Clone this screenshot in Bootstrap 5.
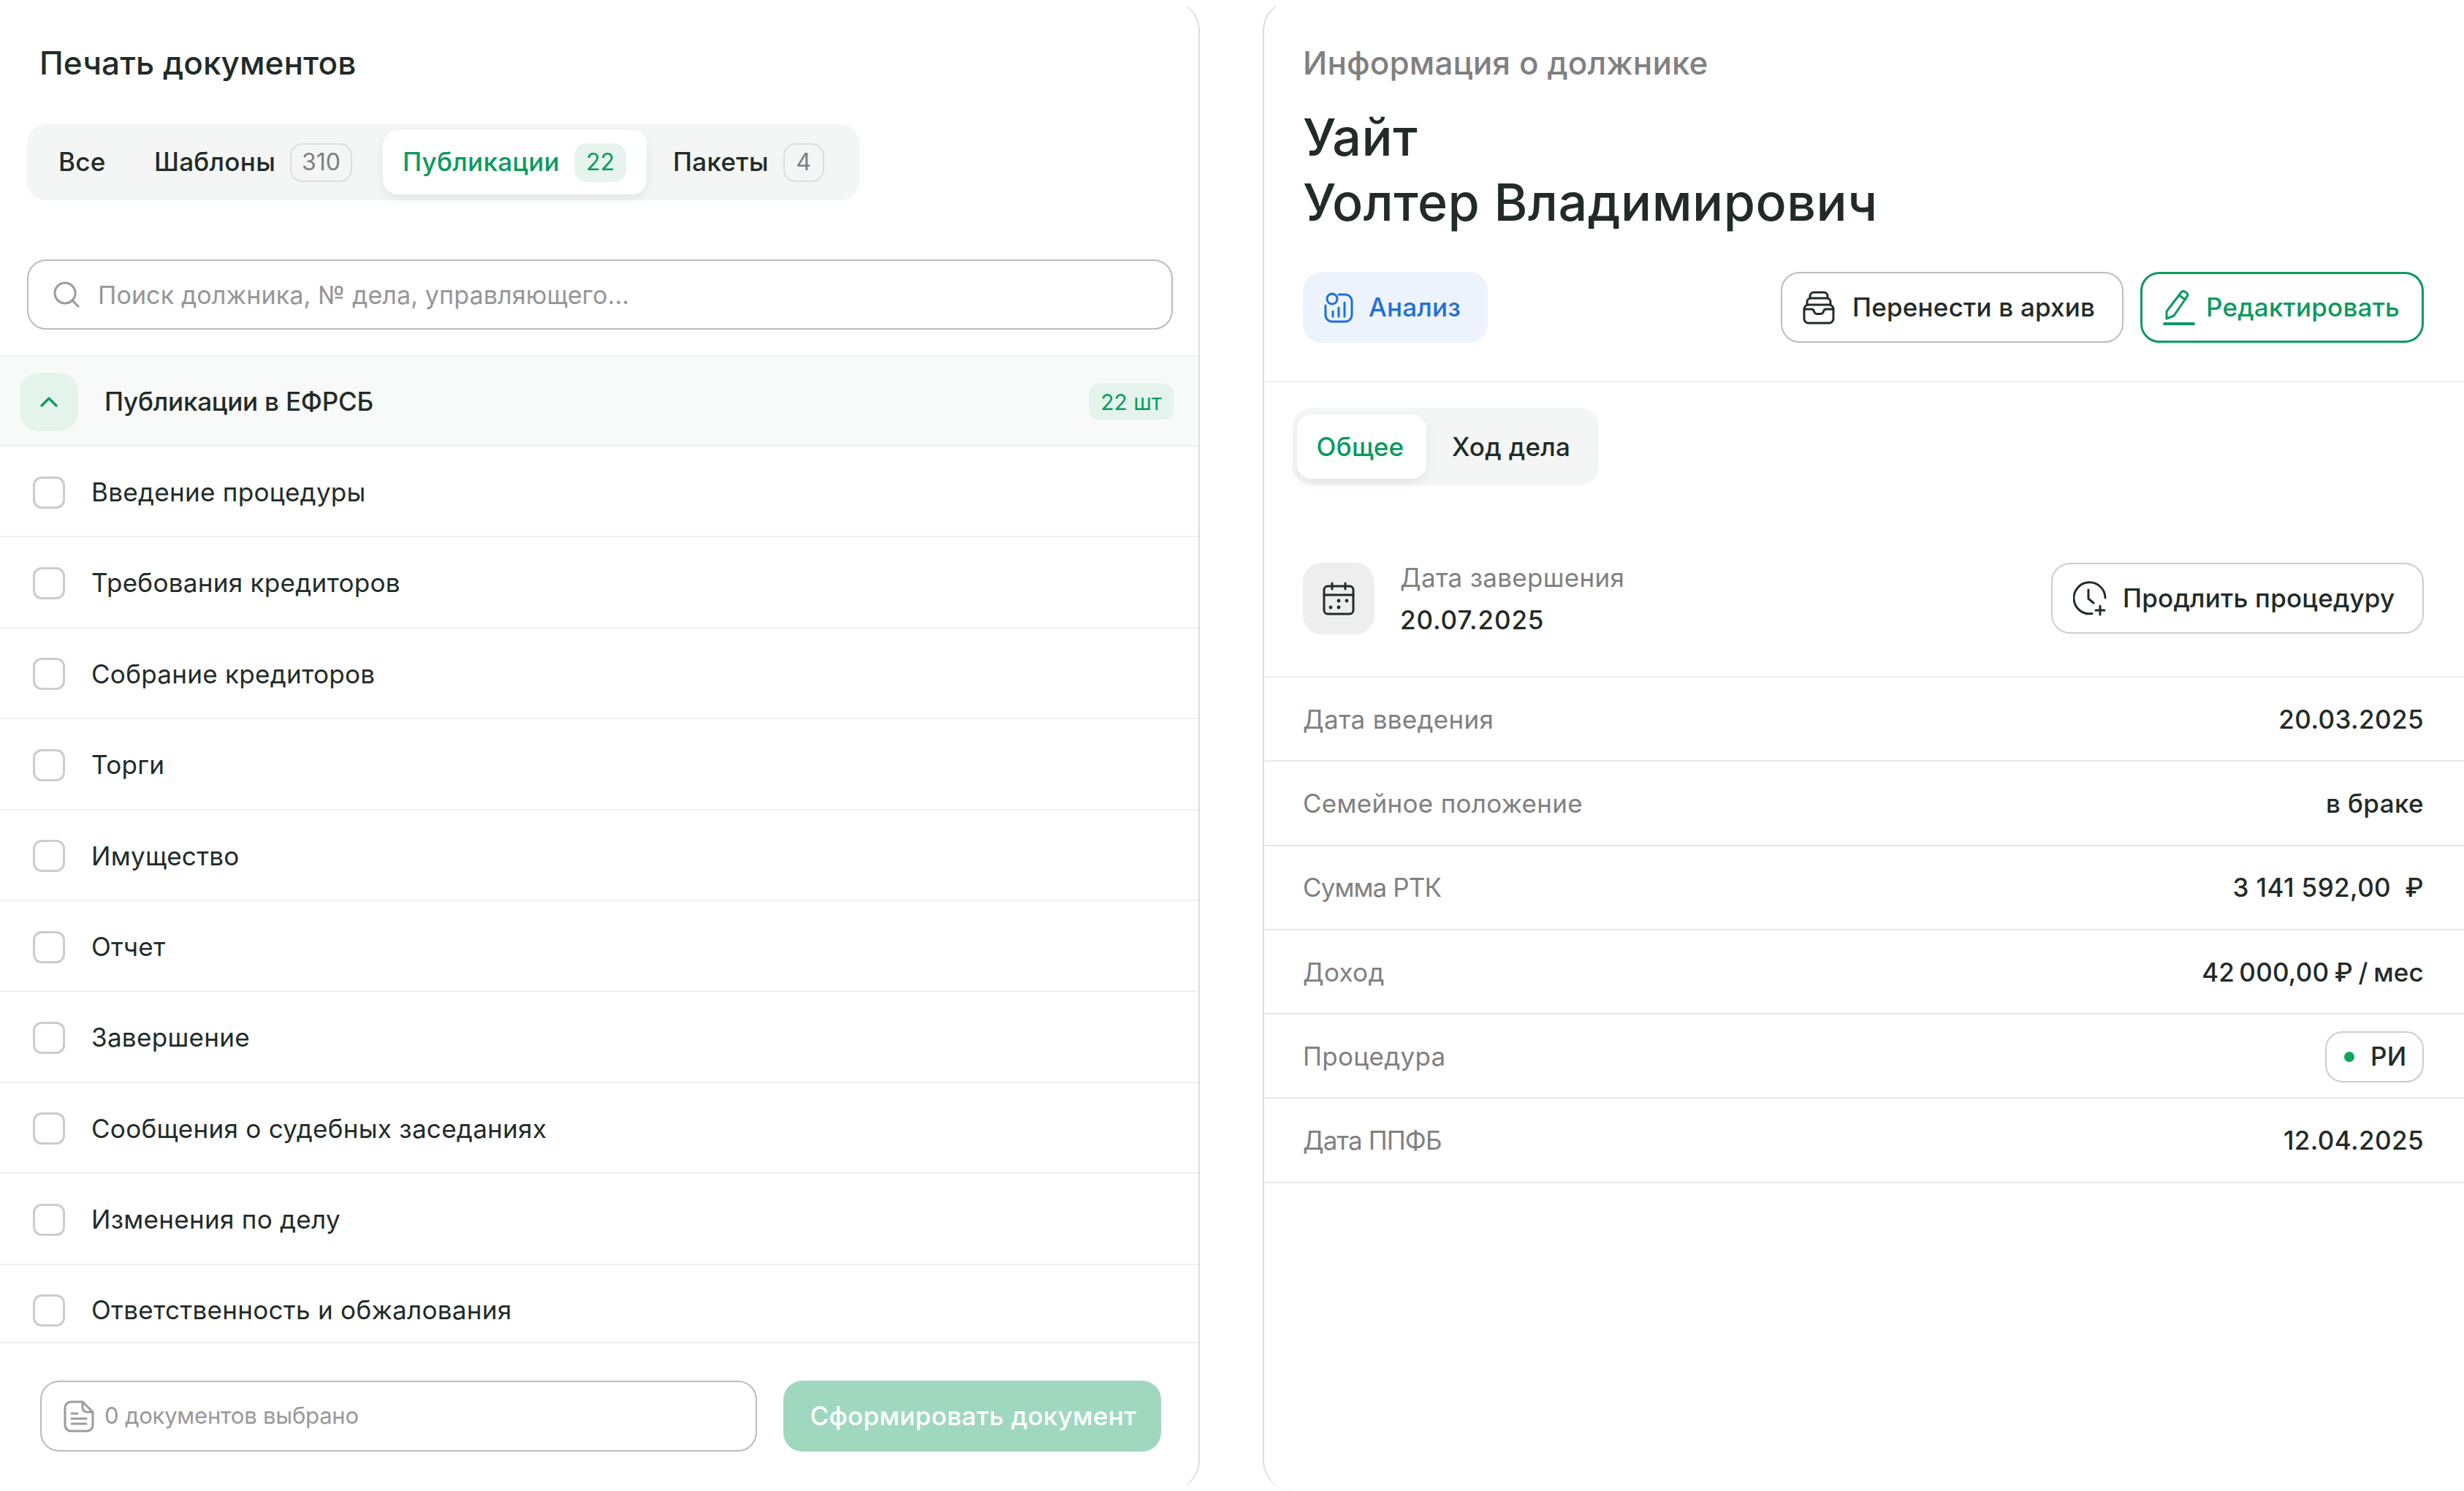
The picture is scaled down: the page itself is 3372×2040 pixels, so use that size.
<!DOCTYPE html>
<html lang="ru">
<head>
    <meta charset="UTF-8">
    <meta name="viewport" content="width=device-width, initial-scale=1.0">
    <title>Печать документов</title>
    <link href="https://cdn.jsdelivr.net/npm/bootstrap@5.3.0/dist/css/bootstrap.min.css" rel="stylesheet">
    <style>
        body {
            background: #fff;
            color: #222b27;
            font-family: "Inter", "Noto Sans", sans-serif;
            font-size: 35px;
            font-weight: 400;
            line-height: 1.3;
            letter-spacing: 0.3px;
            height: 2040px;
            overflow: hidden;
        }
        svg { display: block; flex-shrink: 0; }
        .screen { height: 2040px; gap: 86px; }
        .print-panel {
            width: 1642px;
            height: 2040px;
            border-right: 2px solid #dcdcdc;
            border-top: 1px solid transparent;
            border-bottom: 1px solid transparent;
            border-radius: 0 42px 42px 0;
        }
        .info-panel {
            height: 2040px;
            border-left: 2px solid #dcdcdc;
            border-top: 1px solid transparent;
            border-radius: 42px 42px 0 42px;
        }
        .panel-title { font-size: 44px; font-weight: 500; line-height: 52px; letter-spacing: 0.1px; }
        .print-title { margin: 59px 0 58px 54px; flex-shrink: 0; }

        .seg-tabs { background: #f4f6f5; border-radius: 26px; flex-shrink: 0; }
        .print-tabs { margin-left: 37px; width: 1139px; height: 104px; padding-left: 43px; }
        .seg-tabs .nav-link {
            color: #222b27;
            font-weight: 500;
            height: 88px;
            padding: 0;
            display: flex;
            align-items: center;
            border-radius: 20px;
        }
        .seg-tabs .nav-link.active {
            background: #fff;
            color: #0b9a5e;
            box-shadow: 0 6px 14px rgba(30, 50, 40, .08);
        }
        .tab-all { width: 131px; }
        .tab-tpl { width: 313px; }
        .tab-pub .nav-link { width: 361px; padding-left: 27px; }
        .tab-pack { margin-left: 36px; }
        .tab-count {
            height: 53px;
            min-width: 56px;
            padding: 0 14px;
            margin-left: 20px;
            font-size: 32px;
            font-weight: 400;
            letter-spacing: 0;
            color: #7c7f7e;
            background: transparent;
            border: 2px solid #dcdedd;
            border-radius: 17px;
            display: flex;
            align-items: center;
            justify-content: center;
        }
        .tab-count-on { background: #e7f4ee; border-color: #e7f4ee; color: #0b9a5e; }

        .search-box {
            margin: 81px 35px 35px 37px;
            height: 96px;
            flex-shrink: 0;
            border: 2px solid #bcbcbc;
            border-radius: 26px;
            padding-left: 33px;
            gap: 24px;
        }
        .search-box .form-control {
            border: 0;
            padding: 0;
            font-size: 34px;
            font-weight: 400;
            letter-spacing: 0.12px;
            color: #222b27;
            box-shadow: none;
        }
        .search-box .form-control::placeholder { color: #969696; opacity: 1; }

        .group-head {
            height: 125px;
            background: #f8faf9;
            border-top: 2px solid #eeefef;
            border-bottom: 2px solid #eeefef;
            padding: 2px 34px 0 27px;
        }
        .chevron-box {
            width: 80px;
            height: 80px;
            background: #e4f3ec;
            border-radius: 26px;
            margin-right: 36px;
        }
        .group-title { font-weight: 500; letter-spacing: -0.2px; }
        .qty-tag {
            height: 49px;
            width: 116px;
            background: #e4f3ec;
            color: #0b9a5e;
            font-size: 30px;
            font-weight: 400;
            letter-spacing: 0;
            border-radius: 13px;
            display: flex;
            align-items: center;
            justify-content: center;
        }
        .doc-rows { flex: 1 1 0; min-height: 0; overflow: hidden; }
        .doc-rows .list-group-item {
            flex: 0 0 124.4px;
            padding: 3px 0 0 45px;
            gap: 36px;
            color: #222b27;
            background: transparent;
            border: 0;
            border-bottom: 2px solid #eeefef;
            border-radius: 0;
        }
        .doc-rows .form-check-input {
            width: 44px;
            height: 44px;
            margin: 0;
            border: 3px solid #cccccc;
            border-radius: 12px;
            flex-shrink: 0;
        }
        .print-foot {
            height: 203px;
            flex-shrink: 0;
            border-top: 2px solid #eeefef;
            padding: 51px 51px 0 55px;
            gap: 36px;
        }
        .picked-box {
            width: 982px;
            height: 97px;
            border: 2px solid #bcbcbc;
            border-radius: 26px;
            padding-left: 29px;
            gap: 13px;
            color: #999;
            font-size: 31px;
            font-weight: 400;
            letter-spacing: -0.2px;
        }
        .btn.make-btn {
            width: 518px;
            height: 97px;
            padding: 0 0 0 3px;
            background: #a0d8bf;
            border: 0;
            border-radius: 26px;
            color: #fff;
            font-size: 35px;
            font-weight: 500;
            letter-spacing: 0.3px;
        }

        .info-head { padding: 59px 55px 50px 53px; border-bottom: 2px solid #eeefef; height: 522px; }
        .info-sub { color: #808080; }
        .debtor-name {
            font-size: 70px;
            font-weight: 500;
            line-height: 89px;
            letter-spacing: 0.5px;
            margin: 31px 0 0;
        }
        .head-actions { margin-top: 51px; gap: 23px; }
        .btn.act-btn {
            height: 97px;
            padding: 0;
            font-size: 35px;
            font-weight: 500;
            letter-spacing: 0.2px;
            border-radius: 26px;
            display: flex;
            align-items: center;
            color: #222b27;
            background: #fff;
            border: 2px solid #bcbcbc;
        }
        .btn.analysis-btn { width: 253px; background: #edf3fc; border-color: #edf3fc; color: #1f6fdc; gap: 21px; padding-left: 27px; }
        .btn.archive-btn { width: 469px; gap: 23px; padding-left: 27px; }
        .btn.edit-btn { width: 388px; border: 3px solid #0b9a5e; color: #0b9a5e; gap: 15px; padding-left: 28px; }
        .case-tabs { margin: 35px 0 0 39px; width: 419px; height: 106px; padding: 9px 6px; }
        .case-tabs .nav-link { padding-top: 2px; }
        .case-tabs .nav-link.active { width: 177px; justify-content: center; padding-right: 4px; }
        .case-tabs .tab-plain { margin-left: 35px; }

        .term-row { height: 263px; padding: 106px 55px 0 53px; border-bottom: 2px solid #eeefef; }
        .term-icon { width: 98px; height: 98px; background: #eeeeee; border-radius: 26px; margin-right: 35px; }
        .term-label { color: #808080; line-height: 44px; margin-top: -2px; }
        .term-date { font-weight: 500; line-height: 44px; margin-top: 14px; letter-spacing: 0.9px; }
        .btn.extend-btn { width: 510px; height: 97px; margin-left: auto; gap: 22px; padding-left: 28px; border-color: #cdcdcd; }

        .facts .list-group-item {
            height: 115.3px;
            padding: 2px 55px 0 53px;
            border: 0;
            border-bottom: 2px solid #e8e9e9;
            border-radius: 0;
            color: #808080;
            background: transparent;
        }
        .fact-val { color: #222b27; font-weight: 500; letter-spacing: 0.4px; }
        .fact-tight { word-spacing: -2px; letter-spacing: 0.2px; }
        .caps-label { letter-spacing: -0.9px; }
        .stage-pill {
            width: 135px;
            height: 70px;
            border: 2px solid #cdcdcd;
            border-radius: 24px;
            color: #222b27;
            font-weight: 500;
            padding-left: 24px;
            gap: 22px;
        }
        .stage-dot { width: 14px; height: 14px; border-radius: 50%; background: #0ea55f; }
    </style>
</head>
<body>
<div class="screen d-flex">
    <div class="print-panel d-flex flex-column">
        <div class="panel-title print-title">Печать документов</div>
        <ul class="nav seg-tabs print-tabs align-items-center flex-nowrap">
            <li class="nav-item tab-all"><a class="nav-link" href="#">Все</a></li>
            <li class="nav-item tab-tpl"><a class="nav-link" href="#">Шаблоны<span class="badge tab-count">310</span></a></li>
            <li class="nav-item tab-pub"><a class="nav-link active" href="#">Публикации<span class="badge tab-count tab-count-on">22</span></a></li>
            <li class="nav-item tab-pack"><a class="nav-link" href="#">Пакеты<span class="badge tab-count">4</span></a></li>
        </ul>
        <div class="search-box d-flex align-items-center">
            <svg width="38" height="38" viewBox="0 0 38 38" fill="none" stroke="#9a9a9a" stroke-width="3" stroke-linecap="round"><circle cx="17" cy="17" r="14"/><path d="M27.5 27.5 35 35"/></svg>
            <input type="text" class="form-control" placeholder="Поиск должника, № дела, управляющего...">
        </div>
        <div class="group-head d-flex align-items-center flex-shrink-0">
            <div class="chevron-box d-flex align-items-center justify-content-center">
                <svg width="24" height="16" viewBox="0 0 24 16" fill="none" stroke="#0b9a5e" stroke-width="3.2" stroke-linecap="round" stroke-linejoin="round"><path d="M2 13 12 3l10 10"/></svg>
            </div>
            <span class="group-title">Публикации в ЕФРСБ</span>
            <span class="badge qty-tag ms-auto">22 шт</span>
        </div>
        <div class="list-group doc-rows">
            <label class="list-group-item d-flex align-items-center"><input class="form-check-input" type="checkbox">Введение процедуры</label>
            <label class="list-group-item d-flex align-items-center"><input class="form-check-input" type="checkbox">Требования кредиторов</label>
            <label class="list-group-item d-flex align-items-center"><input class="form-check-input" type="checkbox">Собрание кредиторов</label>
            <label class="list-group-item d-flex align-items-center"><input class="form-check-input" type="checkbox">Торги</label>
            <label class="list-group-item d-flex align-items-center"><input class="form-check-input" type="checkbox">Имущество</label>
            <label class="list-group-item d-flex align-items-center"><input class="form-check-input" type="checkbox">Отчет</label>
            <label class="list-group-item d-flex align-items-center"><input class="form-check-input" type="checkbox">Завершение</label>
            <label class="list-group-item d-flex align-items-center"><input class="form-check-input" type="checkbox">Сообщения о судебных заседаниях</label>
            <label class="list-group-item d-flex align-items-center"><input class="form-check-input" type="checkbox">Изменения по делу</label>
            <label class="list-group-item d-flex align-items-center"><input class="form-check-input" type="checkbox">Ответственность и обжалования</label>
        </div>
        <div class="print-foot d-flex align-items-start">
            <div class="picked-box d-flex align-items-center">
                <svg width="44" height="44" viewBox="0 0 44 44" fill="none" stroke="#9c9c9c" stroke-width="3" stroke-linecap="round" stroke-linejoin="round"><path d="M27 2H11a8 8 0 0 0-8 8v24a8 8 0 0 0 8 8h22a8 8 0 0 0 8-8V16L27 2Z"/><path d="M27 2v8a6 6 0 0 0 6 6h8"/><path d="M12 18h8M12 25h20M12 32h20"/></svg>
                <span>0 документов выбрано</span>
            </div>
            <button type="button" class="btn make-btn">Сформировать документ</button>
        </div>
    </div>
    <div class="info-panel flex-grow-1 d-flex flex-column">
        <div class="info-head flex-shrink-0">
            <div class="panel-title info-sub">Информация о должнике</div>
            <h1 class="debtor-name">Уайт<br>Уолтер Владимирович</h1>
            <div class="head-actions d-flex">
                <button type="button" class="btn act-btn analysis-btn me-auto">
                    <svg width="40" height="42" viewBox="0 0 40 42" fill="none" stroke="#1f6fdc" stroke-width="3" stroke-linecap="round" stroke-linejoin="round"><circle cx="11" cy="9" r="7"/><path d="M20 3h9a9 9 0 0 1 9 9v19a9 9 0 0 1-9 9H11a9 9 0 0 1-9-9V18"/><path d="M12 26v7M20 21v12M28 14v19"/></svg>
                    Анализ
                </button>
                <button type="button" class="btn act-btn archive-btn">
                    <svg width="46" height="46" viewBox="0 0 46 46" fill="none" stroke="#222b27" stroke-width="3" stroke-linecap="round" stroke-linejoin="round"><path d="M11 10V7a5 5 0 0 1 5-5h14a5 5 0 0 1 5 5v3"/><path d="M7 19v-4a5 5 0 0 1 5-5h22a5 5 0 0 1 5 5v4"/><rect x="3" y="19" width="40" height="25" rx="6"/><path d="M3 25h10c2 0 3 1 3.500 3 .5 2 2 3.500 4 3.500h5c2 0 3.500-1.500 4-3.500.5-2 1.500-3 3.500-3h10"/></svg>
                    Перенести в архив
                </button>
                <button type="button" class="btn act-btn edit-btn">
                    <svg width="44" height="48" viewBox="0 0 44 48" fill="none" stroke="#0b9a5e" stroke-width="3" stroke-linecap="round" stroke-linejoin="round"><path d="M5 29 25 3c1-1.500 3-2 5-.8l2 1.300c2 1.300 2.300 3 1.300 4.700L15 35l-10 4V29Z"/><path d="m22 7 9 6"/><path d="M2 46h40" stroke-width="4"/></svg>
                    Редактировать
                </button>
            </div>
        </div>
        <ul class="nav seg-tabs case-tabs flex-nowrap align-items-center">
            <li class="nav-item"><a class="nav-link active" href="#">Общее</a></li>
            <li class="nav-item tab-plain"><a class="nav-link" href="#">Ход дела</a></li>
        </ul>
        <div class="term-row d-flex align-items-start flex-shrink-0">
            <div class="term-icon d-flex align-items-center justify-content-center">
                <svg width="44" height="46" viewBox="0 0 44 46" fill="none" stroke="#222b27" stroke-width="3" stroke-linecap="round" stroke-linejoin="round"><rect x="2" y="6" width="40" height="38" rx="5"/><path d="M2 18h40M13 2v8M31 2v8"/><g fill="#222b27" stroke="none"><circle cx="33" cy="26" r="2.400"/><circle cx="22" cy="26" r="2.400"/><circle cx="11" cy="35" r="2.400"/><circle cx="22" cy="35" r="2.400"/></g></svg>
            </div>
            <div>
                <div class="term-label">Дата завершения</div>
                <div class="term-date">20.07.2025</div>
            </div>
            <button type="button" class="btn act-btn extend-btn">
                <svg width="46" height="50" viewBox="0 0 46 50" fill="none" stroke="#222b27" stroke-width="3" stroke-linecap="round" stroke-linejoin="round"><path d="M26 45.500A21.500 21.500 0 1 1 44 24"/><path d="M21 13v12l7 6"/><path d="M37 35v12M31 41h12"/></svg>
                Продлить процедуру
            </button>
        </div>
        <div class="list-group facts">
            <div class="list-group-item d-flex align-items-center justify-content-between"><span>Дата введения</span><span class="fact-val">20.03.2025</span></div>
            <div class="list-group-item d-flex align-items-center justify-content-between"><span>Семейное положение</span><span class="fact-val">в браке</span></div>
            <div class="list-group-item d-flex align-items-center justify-content-between"><span class="caps-label">Сумма РТК</span><span class="fact-val">3 141 592,00&nbsp; &#8381;</span></div>
            <div class="list-group-item d-flex align-items-center justify-content-between"><span>Доход</span><span class="fact-val fact-tight">42&#8201;000,00 &#8381; / мес</span></div>
            <div class="list-group-item d-flex align-items-center justify-content-between"><span>Процедура</span><span class="stage-pill d-flex align-items-center"><i class="stage-dot"></i>РИ</span></div>
            <div class="list-group-item d-flex align-items-center justify-content-between"><span class="caps-label">Дата ППФБ</span><span class="fact-val">12.04.2025</span></div>
        </div>
    </div>
</div>
<script src="https://cdn.jsdelivr.net/npm/bootstrap@5.3.0/dist/js/bootstrap.bundle.min.js"></script>
</body>
</html>
